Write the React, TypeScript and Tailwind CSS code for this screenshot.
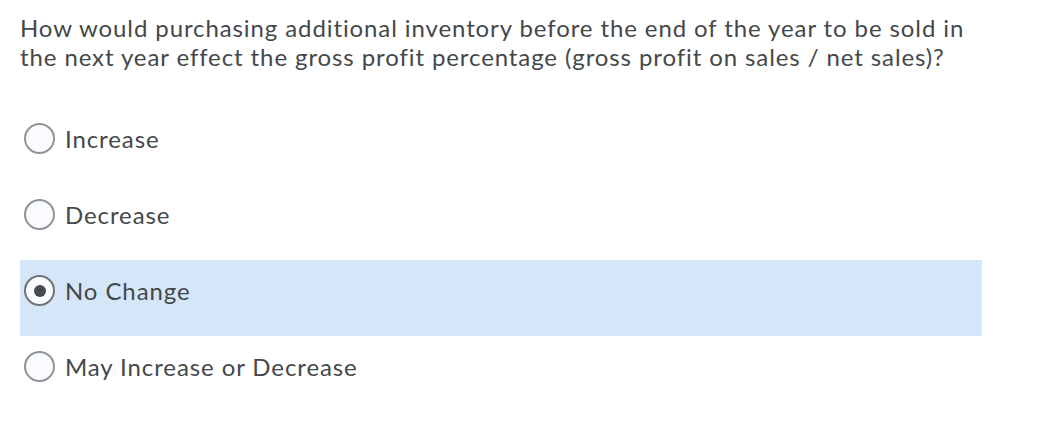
import { useState } from "react";

const OPTIONS = ["Increase", "Decrease", "No Change", "May Increase or Decrease"];

function Radio({ checked }: { checked: boolean }) {
  return (
    <span
      className={
        "flex h-[31px] w-[31px] shrink-0 items-center justify-center rounded-full border-2 bg-[#f9fbff] " +
        (checked ? "border-[#6e7376]" : "border-[#8f9497]")
      }
    >
      {checked && <span className="h-[12px] w-[12px] rounded-full bg-[#494c4e]" />}
    </span>
  );
}

export default function App() {
  const [selected, setSelected] = useState(2);

  return (
    <div
      className="min-h-screen bg-white pl-5 pt-[13px] text-[#45484a] [font-variant-ligatures:none]"
      style={{ fontFamily: "Lato, 'Open Sans', sans-serif" }}
    >
      <p className="w-[962px] text-[24px] leading-[29px] tracking-[0.9px]">
        How would purchasing additional inventory before the end of the year to be sold in the next year effect the
        gross profit percentage (gross profit on sales / net sales)?
      </p>

      <div className="mt-[37px] w-[962px]">
        {OPTIONS.map((label, i) => (
          <label
            key={label}
            onClick={() => setSelected(i)}
            className={
              "flex h-[76px] cursor-pointer items-start gap-[10px] pl-1 pt-[15px] " +
              (selected === i ? "bg-[#d4e6f7]" : "")
            }
          >
            <Radio checked={selected === i} />
            <span className="text-[24px] leading-[31px] tracking-[0.9px]">{label}</span>
          </label>
        ))}
      </div>
    </div>
  );
}
